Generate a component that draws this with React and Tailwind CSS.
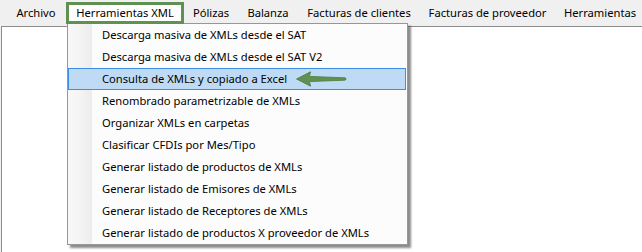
const menuBar = [
  { label: "Archivo", w: "w-[60px]" },
  { label: "Herramientas XML", w: "w-[118px]", active: true },
  { label: "Pólizas", w: "w-[54px]" },
  { label: "Balanza", w: "w-[60px]" },
  { label: "Facturas de clientes", w: "w-[122px]" },
  { label: "Facturas de proveedor", w: "w-[135px]" },
  { label: "Herramientas", w: "w-[90px]" },
];

const items = [
  "Descarga masiva de XMLs desde el SAT",
  "Descarga masiva de XMLs desde el SAT V2",
  "Consulta de XMLs y copiado a Excel",
  "Renombrado parametrizable de XMLs",
  "Organizar XMLs en carpetas",
  "Clasificar CFDIs por Mes/Tipo",
  "Generar listado de productos de XMLs",
  "Generar listado de Emisores de XMLs",
  "Generar listado de Receptores de XMLs",
  "Generar listado de productos X proveedor de XMLs",
];

function Arrow() {
  return (
    <svg width="58" height="20" viewBox="0 0 58 20" className="absolute left-[294px] top-[69px]">
      <path
        d="M2.5 10 L16.5 2.8 L15.5 7.4 L51 8.8 Q53.5 10 51 11.2 L15.5 12.6 L16.5 17.2 Z"
        fill="#5e9152"
        stroke="#4b7b40"
        strokeWidth="0.8"
        strokeLinejoin="round"
      />
    </svg>
  );
}

export default function App() {
  return (
    <div
      className="relative w-[642px] h-[252px] overflow-hidden bg-[#f0f0f0] text-[11.2px] text-black"
      style={{ fontFamily: '"Noto Sans", "Open Sans", sans-serif' }}
    >
      <div className="flex items-start h-[26px] pt-[2px] pl-[6px]">
        {menuBar.map((m) =>
          m.active ? (
            <div
              key={m.label}
              className={`${m.w} h-[22px] shrink-0 flex items-center justify-center whitespace-nowrap bg-white border-[3px] border-[#5e9152] relative z-20`}
            >
              {m.label}
            </div>
          ) : (
            <div key={m.label} className={`${m.w} h-[22px] shrink-0 flex items-center justify-center whitespace-nowrap`}>
              {m.label}
            </div>
          )
        )}
      </div>
      <div className="ml-[1px] h-[226px] bg-white border-l border-t border-[#8c8c8c]" />

      <div className="absolute left-[67px] top-[23px] w-[341px] h-[222px] bg-[#fcfcfc] border border-[#979797] shadow-[3px_3px_2px_rgba(0,0,0,0.45)] z-10 flex">
        <div className="absolute left-0 top-0 bottom-0 w-[24px] bg-gradient-to-r from-[#f8f8f8] via-[#f4f4f4] to-[#ececec]" />
        <div className="relative flex flex-col w-full">
          {items.map((t, i) => (
            <div
              key={t}
              className={
                i === 2
                  ? "h-[22px] mr-[1px] flex items-center pl-[33px] whitespace-nowrap bg-[#bfdaf5] border border-[#3d8ee6]"
                  : "h-[22px] flex items-center pl-[34px] whitespace-nowrap"
              }
            >
              {t}
            </div>
          ))}
        </div>
      </div>
      <div className="absolute inset-0 z-30 pointer-events-none">
        <Arrow />
      </div>
    </div>
  );
}
